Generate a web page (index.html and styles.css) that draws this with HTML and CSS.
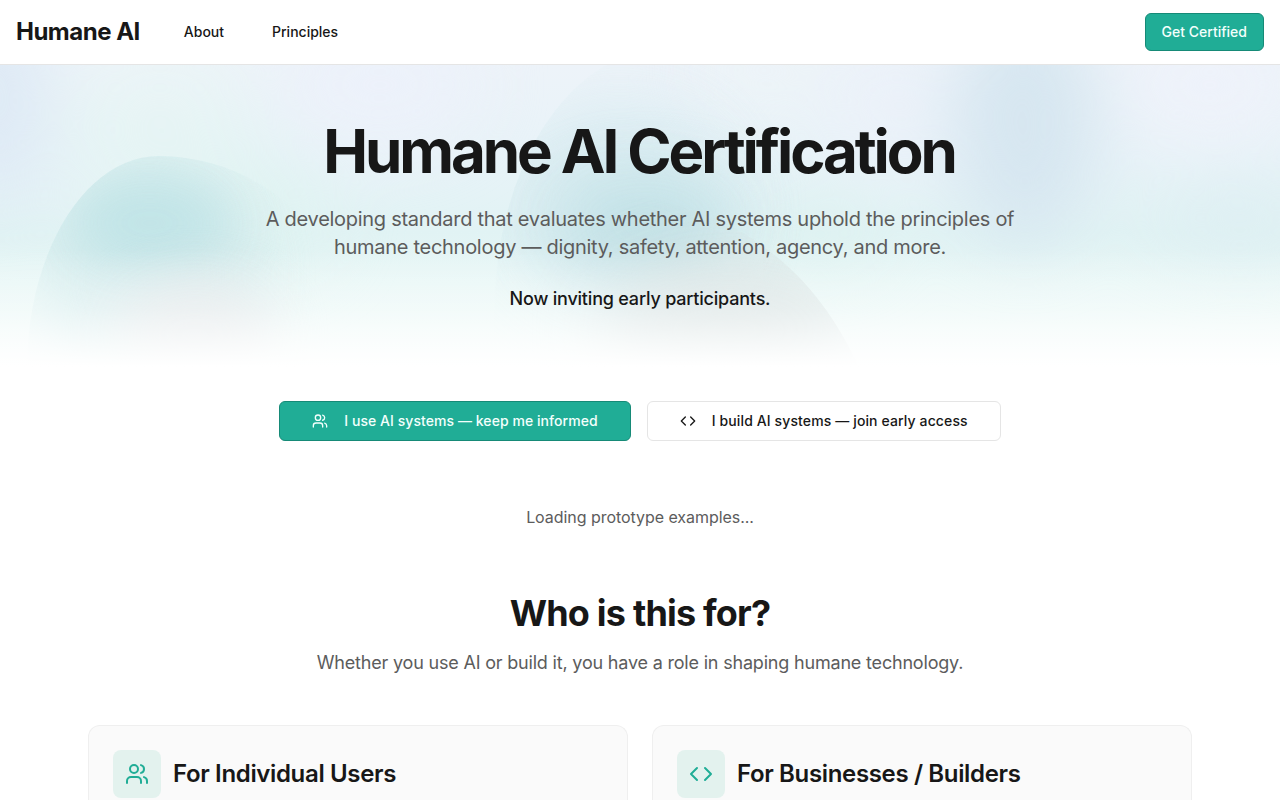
FILE: index.html
```
<!DOCTYPE html>
<html lang="en">
<head>
  <meta charset="UTF-8">
  <title>Humane AI Certification</title>
  <link rel="stylesheet" href="styles.css">
</head>
<body>

  <header class="navbar">
    <a class="logo" href="#">Humane AI</a>
    <nav class="nav-links">
      <a href="#">About</a>
      <a href="#">Principles</a>
    </nav>
    <a class="btn btn-primary btn-nav" href="#">Get Certified</a>
  </header>

  <section class="hero">
    <!-- soft aurora background -->
    <svg class="hero-bg" viewBox="0 0 1280 304" preserveAspectRatio="none" aria-hidden="true">
      <defs>
        <linearGradient id="base" x1="0" y1="0" x2="0" y2="1">
          <stop offset="0" stop-color="#edf3f9"/>
          <stop offset=".3" stop-color="#e8f3f8"/>
          <stop offset=".55" stop-color="#e1f3f4"/>
          <stop offset=".72" stop-color="#e8f7f6"/>
          <stop offset="1" stop-color="#f0faf8"/>
        </linearGradient>
        <linearGradient id="fade" x1="0" y1="0" x2="0" y2="1">
          <stop offset="0" stop-color="#fff" stop-opacity="0"/>
          <stop offset=".5" stop-color="#fff" stop-opacity=".4"/>
          <stop offset=".98" stop-color="#fff"/>
          <stop offset="1" stop-color="#fff"/>
        </linearGradient>
        <filter id="blur20" x="-100%" y="-100%" width="300%" height="300%"><feGaussianBlur stdDeviation="26"/></filter>
        <filter id="blur30" x="-100%" y="-100%" width="300%" height="300%"><feGaussianBlur stdDeviation="34"/></filter>
        <clipPath id="arch-left"><path d="M27 304C27 186 86 91 159 91C230 92 280 125 320 170L420 304Z"/></clipPath>
        <clipPath id="arch-mid"><ellipse cx="662" cy="250" rx="168" ry="265"/></clipPath>
        <clipPath id="arch-low"><path d="M480 304V130H640C690 143 720 153 742 167C795 200 830 240 860 304Z"/></clipPath>
      </defs>
      <rect width="1280" height="304" fill="url(#base)"/>
      <g filter="url(#blur30)">
        <ellipse cx="-5" cy="30" rx="50" ry="110" fill="#dde9f5"/>
        <ellipse cx="160" cy="80" rx="100" ry="80" fill="#e5f4f4"/>
        <ellipse cx="160" cy="0" rx="100" ry="30" fill="#ecf4f7"/>
        <ellipse cx="380" cy="20" rx="100" ry="60" fill="#ecf1fa"/>
        <ellipse cx="760" cy="5" rx="60" ry="25" fill="#edf5f7"/>
        <ellipse cx="890" cy="40" rx="60" ry="60" fill="#ebf1f9"/>
        <ellipse cx="1210" cy="20" rx="90" ry="60" fill="#eef2fa"/>
        <ellipse cx="1240" cy="155" rx="90" ry="30" fill="#ddeef2"/>
        <ellipse cx="260" cy="150" rx="70" ry="50" fill="#dff3f1"/>
        <ellipse cx="820" cy="170" rx="60" ry="25" fill="#dcf1ef"/>
        <ellipse cx="1025" cy="60" rx="72" ry="120" fill="#d6e6f0"/>
      </g>
      <g clip-path="url(#arch-left)">
        <ellipse cx="145" cy="210" rx="115" ry="130" fill="#d3ebec" opacity=".75" filter="url(#blur20)"/>
        <ellipse cx="150" cy="158" rx="80" ry="45" fill="#bee3e6" opacity=".9" filter="url(#blur20)"/>
        <ellipse cx="195" cy="270" rx="80" ry="55" fill="#e3e6e8" opacity=".9" filter="url(#blur20)"/>
      </g>
      <g clip-path="url(#arch-mid)">
        <ellipse cx="620" cy="140" rx="115" ry="100" fill="#d5eaef" opacity=".75" filter="url(#blur30)"/>
        <ellipse cx="645" cy="160" rx="90" ry="45" fill="#bddfe4" opacity=".9" filter="url(#blur30)"/>
      </g>
      <g clip-path="url(#arch-low)">
        <ellipse cx="730" cy="265" rx="130" ry="70" fill="#d5dfdf" opacity=".9" filter="url(#blur30)"/>
      </g>
      <rect y="184" width="1280" height="120" fill="url(#fade)"/>
    </svg>
    <div class="hero-text">
      <h1>Humane AI Certification</h1>
      <p class="lead">A developing standard that evaluates whether AI systems uphold the principles of humane technology — dignity, safety, attention, agency, and more.</p>
      <p class="invite">Now inviting early participants.</p>
    </div>
  </section>

  <!-- call to action -->
  <div class="actions">
    <a class="btn btn-primary btn-large" href="#">
      <svg class="icon" viewBox="0 0 24 24"><path d="M16 21v-2a4 4 0 0 0-4-4H6a4 4 0 0 0-4 4v2"/><circle cx="9" cy="7" r="4"/><path d="M22 21v-2a4 4 0 0 0-3-3.87"/><path d="M16 3.13a4 4 0 0 1 0 7.75"/></svg>
      <span>I use AI systems — keep me informed</span>
    </a>
    <a class="btn btn-outline btn-large" href="#">
      <svg class="icon" viewBox="0 0 24 24"><path d="m16 18 6-6-6-6"/><path d="m8 6-6 6 6 6"/></svg>
      <span>I build AI systems — join early access</span>
    </a>
  </div>

  <p class="loading">Loading prototype examples...</p>

  <section class="audience">
    <h2>Who is this for?</h2>
    <p class="subtitle">Whether you use AI or build it, you have a role in shaping humane technology.</p>
    <div class="cards">
      <div class="card">
        <div class="card-icon">
          <svg class="icon" viewBox="0 0 24 24"><path d="M16 21v-2a4 4 0 0 0-4-4H6a4 4 0 0 0-4 4v2"/><circle cx="9" cy="7" r="4"/><path d="M22 21v-2a4 4 0 0 0-3-3.87"/><path d="M16 3.13a4 4 0 0 1 0 7.75"/></svg>
        </div>
        <h3>For Individual Users</h3>
      </div>
      <div class="card">
        <div class="card-icon">
          <svg class="icon" viewBox="0 0 24 24"><path d="m16 18 6-6-6-6"/><path d="m8 6-6 6 6 6"/></svg>
        </div>
        <h3>For Businesses / Builders</h3>
      </div>
    </div>
  </section>

</body>
</html>
```
FILE: styles.css
```
* {
  box-sizing: border-box;
  margin: 0;
}

body {
  font-family: Inter, sans-serif;
  background: white;
  color: #171717;
  height: 100vh;
  overflow: hidden;
}

a {
  color: inherit;
  text-decoration: none;
}

.navbar {
  display: flex;
  align-items: center;
  height: 65px;
  padding: 0 16px;
  border-bottom: 1px solid #e5e5e5;
}

.logo {
  font-size: 24px;
  font-weight: 700;
  line-height: 32px;
  letter-spacing: -0.5px;
}

.nav-links {
  display: flex;
  gap: 48px;
  margin-left: 44px;
  font-size: 14px;
  font-weight: 500;
  line-height: 20px;
}

.btn {
  display: flex;
  align-items: center;
  justify-content: center;
  border: 1px solid #e5e5e5;
  border-radius: 6px;
  font-size: 14px;
  font-weight: 500;
  line-height: 20px;
}

.btn-primary {
  background: #20ad96;
  border-color: #168a77;
  color: #f3fffc;
}

.btn-nav {
  height: 38px;
  padding: 0 16px;
  margin-left: auto;
}

.btn-large {
  height: 40px;
  padding: 0 32px;
  gap: 16px;
  letter-spacing: 0.06px;
}

.btn-outline {
  letter-spacing: 0.12px;
}

.icon {
  width: 16px;
  height: 16px;
  fill: none;
  stroke: currentColor;
  stroke-width: 2;
  stroke-linecap: round;
  stroke-linejoin: round;
}

.hero {
  position: relative;
  height: 304px;
  padding-top: 48px;
  text-align: center;
}

.hero-bg {
  position: absolute;
  inset: 0;
  width: 100%;
  height: 100%;
}

.hero-bg filter {
  color-interpolation-filters: sRGB;
}

.hero-text {
  position: relative;
  max-width: 768px;
  margin: 0 auto;
}

h1 {
  padding-right: 2px;
  font-size: 60px;
  font-weight: 700;
  font-variation-settings: "opsz" 32;
  line-height: 76px;
  letter-spacing: -3.1px;
  white-space: nowrap;
}

.lead {
  margin-top: 16px;
  font-size: 20px;
  line-height: 28px;
  letter-spacing: -0.28px;
  color: #5c5c5c;
}

.invite {
  margin-top: 24px;
  font-size: 18px;
  font-weight: 500;
  line-height: 28px;
  letter-spacing: -0.2px;
}

.actions {
  display: flex;
  justify-content: center;
  gap: 16px;
  margin-top: 32px;
}

.loading {
  margin-top: 64px;
  font-size: 16px;
  line-height: 24px;
  letter-spacing: -0.05px;
  text-align: center;
  color: #5c5c5c;
}

.audience {
  max-width: 1104px;
  margin: 64px auto 0;
  text-align: center;
}

h2 {
  font-size: 36px;
  font-weight: 700;
  line-height: 40px;
  letter-spacing: -0.8px;
}

.subtitle {
  margin-top: 16px;
  font-size: 18px;
  line-height: 28px;
  letter-spacing: -0.19px;
  color: #5c5c5c;
}

.cards {
  display: grid;
  grid-template-columns: 1fr 1fr;
  gap: 24px;
  margin-top: 48px;
}

.card {
  display: flex;
  align-items: flex-start;
  gap: 12px;
  padding: 24px;
  background: #fafafa;
  border: 1px solid #efefef;
  border-bottom: none;
  border-radius: 12px 12px 0 0;
}

.card-icon {
  display: flex;
  align-items: center;
  justify-content: center;
  width: 48px;
  height: 48px;
  border-radius: 8px;
  background: #e3f2ee;
  color: #20ad96;
}

.card-icon .icon {
  width: 24px;
  height: 24px;
}

h3 {
  font-size: 24px;
  font-weight: 600;
  line-height: 48px;
  letter-spacing: -0.35px;
}
```
